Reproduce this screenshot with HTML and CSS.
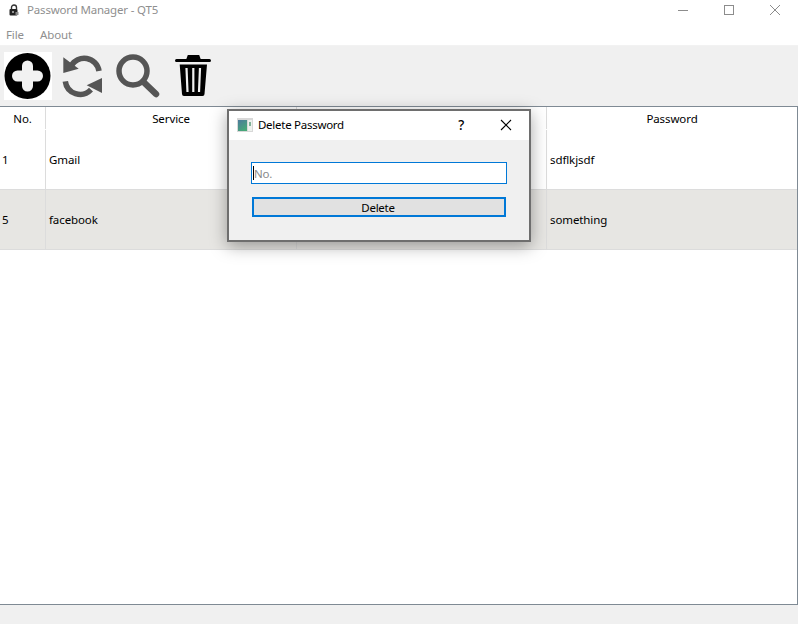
FILE: index.html
```html
<!DOCTYPE html>
<html lang="en">
  <head>
    <meta charset="UTF-8" />
    <title>Password Manager - QT5</title>
    <link rel="stylesheet" href="styles.css">
  </head>
  <body>
    <div class="window">
      <!-- Title bar -->
      <div class="titlebar">
        <svg class="app-icon" width="10" height="12" viewBox="0 0 10 12">
          <path d="M2.500 5V3.500a2.500 2.500 0 0 1 5 0V5" fill="none" stroke="#333" stroke-width="1.400"/>
          <rect x="0.500" y="5" width="8" height="6.500" rx="1" fill="#222"/>
          <rect x="6.500" y="8" width="3" height="3" fill="#8a8a8a"/>
          <circle cx="4" cy="8" r="1" fill="#bbb"/>
        </svg>
        <span class="app-title">Password Manager - QT5</span>
        <div class="win-buttons">
          <svg width="12" height="12" viewBox="0 0 12 12"><path d="M1 6.500H11" stroke="#8c8c8c" fill="none"/></svg>
          <svg width="12" height="12" viewBox="0 0 12 12"><rect x="1.500" y="1.500" width="9" height="9" stroke="#8c8c8c" fill="none"/></svg>
          <svg width="12" height="12" viewBox="0 0 12 12"><path d="M1 1L11 11M11 1L1 11" stroke="#8c8c8c" fill="none"/></svg>
        </div>
      </div>

      <!-- Menu -->
      <div class="menubar">
        <span>File</span>
        <span>About</span>
      </div>

      <!-- Toolbar -->
      <div class="toolbar">
        <button class="tool tool-add">
          <svg width="48" height="48" viewBox="0 0 48 48">
            <circle cx="23.500" cy="24" r="23" fill="#000"/>
            <path d="M23.500 14V34M13.500 24H33.500" stroke="#f2f2f2" stroke-width="11" stroke-linecap="round" fill="none"/>
          </svg>
        </button>
        <button class="tool tool-refresh">
          <svg width="46" height="48" viewBox="0 0 46 48">
            <path d="M11 14A15 15 0 0 1 39 19" fill="none" stroke="#555" stroke-width="5.500"/>
            <path d="M3.300 5.300V21L18.700 16.700Z" fill="#555"/>
            <path d="M5.300 29.300A15 15 0 0 0 31 37.700" fill="none" stroke="#555" stroke-width="5.500"/>
            <path d="M42 26V41L26.700 33.300Z" fill="#555"/>
          </svg>
        </button>
        <button class="tool tool-search">
          <svg width="46" height="46" viewBox="0 0 46 46">
            <circle cx="17" cy="18" r="14" fill="none" stroke="#555" stroke-width="5.500"/>
            <path d="M28 29.500L40 41" stroke="#555" stroke-width="6.500" stroke-linecap="round"/>
          </svg>
        </button>
        <button class="tool tool-trash">
          <svg width="36" height="44" viewBox="0 0 36 44">
            <path d="M1.500 6.500H34.500" stroke="#000" stroke-width="3" stroke-linecap="round"/>
            <path d="M12 6L13.500 2H23.500L25 6" fill="#000" stroke="#000" stroke-width="2"/>
            <path d="M4.700 10.500H32L29.500 40A2 2 0 0 1 27.500 42H9A2 2 0 0 1 7 40Z" fill="#000"/>
            <path d="M11.500 14L12.500 38M18.300 14V38M25 14L24 38" stroke="#f0f0f0" stroke-width="2.200"/>
          </svg>
        </button>
      </div>

      <!-- Table -->
      <div class="table-wrap">
        <div class="row row-head">
          <div class="cell">No.</div>
          <div class="cell">Service</div>
          <div class="cell"></div>
          <div class="cell">Password</div>
        </div>
        <div class="row">
          <div class="cell">1</div>
          <div class="cell">Gmail</div>
          <div class="cell"></div>
          <div class="cell">sdflkjsdf</div>
        </div>
        <div class="row row-alt">
          <div class="cell">5</div>
          <div class="cell">facebook</div>
          <div class="cell"></div>
          <div class="cell">something</div>
        </div>
      </div>

      <div class="statusbar"></div>
    </div>

    <!-- Delete dialog -->
    <div class="dialog">
      <div class="dialog-title">
        <svg class="dialog-icon" width="16" height="14" viewBox="0 0 16 14">
          <defs>
            <linearGradient id="dialogIconFill" x1="0" y1="0" x2="0.600" y2="1">
              <stop offset="0" stop-color="#4d7a9c"/>
              <stop offset="1" stop-color="#46a878"/>
            </linearGradient>
          </defs>
          <rect width="16" height="14" fill="#d8d8d8"/>
          <rect x="1" y="2" width="9" height="11" fill="url(#dialogIconFill)"/>
          <rect x="11" y="2" width="4" height="11" fill="#eef2ee"/>
          <rect x="12" y="4" width="2" height="4" fill="#7fb298"/>
        </svg>
        <span class="dialog-name">Delete Password</span>
        <span class="dialog-help">?</span>
        <svg class="dialog-close" width="12" height="12" viewBox="0 0 12 12"><path d="M1 1L11 11M11 1L1 11" stroke="#000" stroke-width="1.100" fill="none"/></svg>
      </div>
      <div class="dialog-body">
        <div class="field"><span class="caret"></span><span class="placeholder">No.</span></div>
        <button class="btn-delete">Delete</button>
      </div>
    </div>
  </body>
</html>
```

FILE: styles.css
```css
* {
  box-sizing: border-box;
}

body {
  margin: 0;
  width: 798px;
  height: 624px;
  overflow: hidden;
  font-family: "Noto Sans", Arial, sans-serif;
  font-size: 11.5px;
  letter-spacing: -0.1px;
  color: #000;
  background-color: #f0f0f0;
}

.window {
  height: 624px;
  display: flex;
  flex-direction: column;
}

/* Title bar */
.titlebar {
  height: 26px;
  flex: none;
  display: flex;
  align-items: center;
  padding-left: 9px;
  padding-bottom: 7px;
  background-color: #fff;
}

.app-icon {
  margin-right: 8px;
}

.app-title {
  color: #8f8f8f;
  letter-spacing: -0.18px;
}

.win-buttons {
  margin-left: auto;
  display: flex;
  gap: 34px;
  padding-right: 17px;
  padding-top: 1px;
}

/* Menu */
.menubar {
  height: 20px;
  flex: none;
  display: flex;
  align-items: center;
  gap: 16px;
  padding-left: 6px;
  padding-bottom: 2px;
  color: #8f8f8f;
  background-color: #fff;
  border-bottom: 1px solid #f2f2f2;
}

/* Toolbar */
.toolbar {
  height: 60px;
  flex: none;
  display: flex;
  align-items: flex-start;
  padding: 6px 0 0 4px;
  background-color: #f0f0f0;
}

.tool {
  border: none;
  padding: 0;
  background: none;
  display: block;
}

.tool svg {
  display: block;
}

.tool-add {
  background-color: #fff;
}

.tool-refresh {
  margin-left: 8px;
}

.tool-search {
  margin-left: 10px;
  margin-top: 1px;
}

.tool-trash {
  margin-left: 13px;
  margin-top: 2px;
}

/* Table */
.table-wrap {
  flex: 1;
  background-color: #fff;
  border: 1px solid #7f8a94;
  border-left: none;
}

.row {
  display: grid;
  grid-template-columns: 46px 251px 250px 250px;
  height: 60px;
  border-bottom: 1px solid #dcdcdc;
}

.row-head {
  height: 24px;
  padding-bottom: 2px;
  border-bottom: none;
  margin-bottom: -1px;
  text-align: center;
}

.row-alt {
  background-color: #e7e6e3;
}

.cell {
  display: flex;
  align-items: center;
  padding-left: 3px;
  border-right: 1px solid #dcdcdc;
  white-space: nowrap;
}

.cell:first-child {
  padding-left: 2px;
}

.cell:last-child {
  border-right: none;
}

.row-head .cell {
  justify-content: center;
  padding-left: 0;
}

.statusbar {
  height: 19px;
  flex: none;
  background-color: #f0f0f0;
}

/* Dialog, floats over the table */
.dialog {
  position: absolute;
  left: 227px;
  top: 109px;
  width: 304px;
  height: 133px;
  border: 2px solid #6e6e6e;
  background-color: #f0f0f0;
  box-shadow: 0 4px 16px rgba(0, 0, 0, 0.35);
  letter-spacing: -0.27px;
}

.dialog-title {
  height: 29px;
  display: flex;
  align-items: center;
  padding-left: 8px;
  padding-bottom: 2px;
  background-color: #fff;
}

.dialog-icon {
  margin-right: 5px;
}

.dialog-help {
  margin-left: auto;
  font-size: 13.5px;
  font-weight: 500;
}

.dialog-close {
  margin-left: 36px;
  margin-right: 17px;
}

.dialog-body {
  display: flex;
  flex-direction: column;
  padding: 22px 22px 0 22px;
}

.field {
  width: 256px;
  height: 22px;
  display: flex;
  align-items: center;
  padding-left: 1px;
  background-color: #fff;
  border: 1px solid #0078d7;
}

.caret {
  width: 1px;
  height: 14px;
  background-color: #000;
}

.placeholder {
  color: #8a8a8a;
}

.btn-delete {
  width: 254px;
  height: 20px;
  margin-top: 13px;
  margin-left: 1px;
  padding: 0 2px 0 0;
  font: inherit;
  letter-spacing: inherit;
  color: #000;
  background-color: #e1e1e1;
  border: 2px solid #0078d7;
}
```
